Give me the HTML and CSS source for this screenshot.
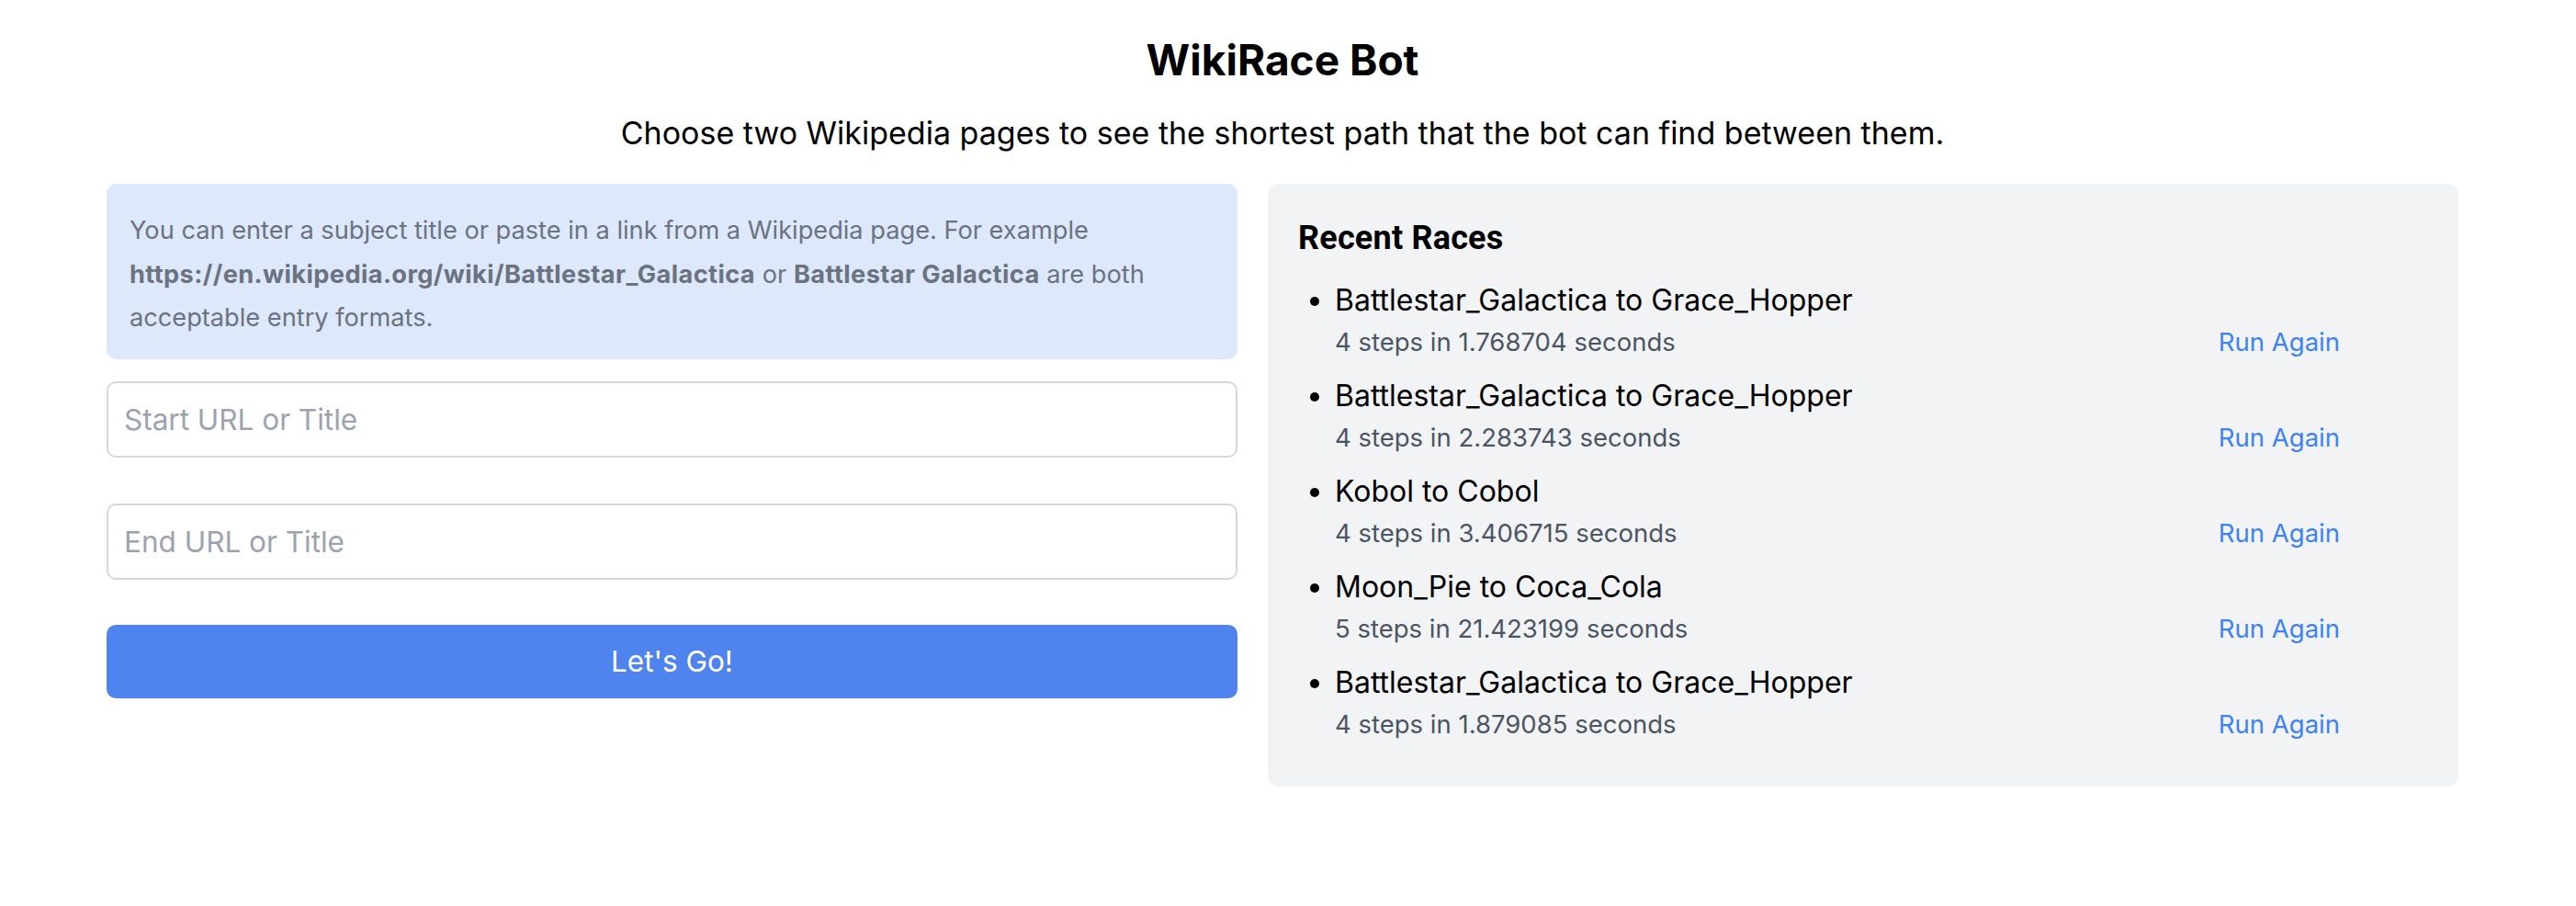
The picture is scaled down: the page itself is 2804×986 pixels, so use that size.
FILE: index.html
```html
<!DOCTYPE html>
<html lang="en">
<head>
<meta charset="utf-8">
<title>WikiRace Bot</title>
<link rel="stylesheet" href="styles.css">
</head>
<body>
<header class="page-header">
  <h1 class="title">WikiRace Bot</h1>
  <p class="subtitle">Choose two Wikipedia pages to see the shortest path that the bot can find between them.</p>
</header>
<main class="columns">
  <section class="form-col">
    <div class="info">
      You can enter a subject title or paste in a link from a Wikipedia page. For example <strong>https://en.wikipedia.org/wiki/Battlestar_Galactica</strong> or <strong>Battlestar Galactica</strong> are both acceptable entry formats.
    </div>
    <input class="field field-start" type="text" placeholder="Start URL or Title">
    <input class="field field-end" type="text" placeholder="End URL or Title">
    <button class="go" type="button">Let's Go!</button>
  </section>
  <section class="recent">
    <h2 class="recent-title">Recent Races</h2>
    <ul class="race-list">
      <li class="race">
        <div class="race-name">Battlestar_Galactica to Grace_Hopper</div>
        <div class="race-meta"><span class="race-stats">4 steps in 1.768704 seconds</span><a class="again" href="#">Run Again</a></div>
      </li>
      <li class="race">
        <div class="race-name">Battlestar_Galactica to Grace_Hopper</div>
        <div class="race-meta"><span class="race-stats">4 steps in 2.283743 seconds</span><a class="again" href="#">Run Again</a></div>
      </li>
      <li class="race">
        <div class="race-name">Kobol to Cobol</div>
        <div class="race-meta"><span class="race-stats">4 steps in 3.406715 seconds</span><a class="again" href="#">Run Again</a></div>
      </li>
      <li class="race">
        <div class="race-name">Moon_Pie to Coca_Cola</div>
        <div class="race-meta"><span class="race-stats">5 steps in 21.423199 seconds</span><a class="again" href="#">Run Again</a></div>
      </li>
      <li class="race">
        <div class="race-name">Battlestar_Galactica to Grace_Hopper</div>
        <div class="race-meta"><span class="race-stats">4 steps in 1.879085 seconds</span><a class="again" href="#">Run Again</a></div>
      </li>
    </ul>
  </section>
</main>
</body>
</html>
```

FILE: styles.css
```css
* { box-sizing: border-box; }

html, body {
  margin: 0;
  padding: 0;
  background: #ffffff;
}

body {
  font-family: Inter, "Noto Sans", "Liberation Sans", sans-serif;
  color: #000000;
}

.page-header {
  text-align: center;
  padding-top: 37px;
  padding-right: 12px;
}

.title {
  margin: 0;
  font-size: 46px;
  line-height: 56px;
  font-weight: 700;
}

.subtitle {
  margin: 27px 0 0;
  font-size: 34px;
  line-height: 49px;
}

.columns {
  display: grid;
  grid-template-columns: 1231px 1296px;
  column-gap: 33px;
  align-items: start;
  margin-top: 31px;
  padding-left: 116px;
}

.form-col {
  display: flex;
  flex-direction: column;
}

.info {
  background: #dde8fa;
  border-radius: 10px;
  padding: 27px 24px 21px 25px;
  font-size: 27.2px;
  line-height: 47.5px;
  color: #6b7280;
}

.info strong {
  font-weight: 700;
  letter-spacing: 0.4px;
}

.field {
  display: block;
  width: 100%;
  height: 83px;
  border: 2px solid #d4d8de;
  border-radius: 10px;
  padding: 0 17px;
  font-family: inherit;
  font-size: 31.5px;
  color: #111827;
  background: #ffffff;
  outline: none;
}

.field::placeholder {
  color: #9ca3af;
}

.field-start { margin-top: 24px; }
.field-end { margin-top: 50px; }

.go {
  margin-top: 49px;
  height: 80px;
  width: 100%;
  border: 0;
  border-radius: 10px;
  background: #4f83ed;
  color: #ffffff;
  font-family: inherit;
  font-size: 31.5px;
  padding: 0;
}

.recent {
  background: #f2f3f5;
  border-radius: 12px;
  padding: 35px 33px 47px 33px;
}

.recent-title {
  margin: 0;
  font-family: Roboto, Inter, sans-serif;
  font-size: 36px;
  line-height: 49px;
  font-weight: 700;
  letter-spacing: 0.2px;
}

.race-list {
  margin: 18px 0 0;
  padding: 0 0 0 40px;
  list-style: disc;
}

.race {
  font-size: 32px;
}

.race + .race {
  margin-top: 13px;
}

.race-name {
  font-size: 32px;
  line-height: 49px;
}

.race-meta {
  display: flex;
  justify-content: space-between;
  padding-right: 96px;
  font-size: 27.5px;
  line-height: 42px;
}

.race-stats {
  color: #4b5563;
}

.again {
  color: #3b82f6;
  text-decoration: none;
}
```
